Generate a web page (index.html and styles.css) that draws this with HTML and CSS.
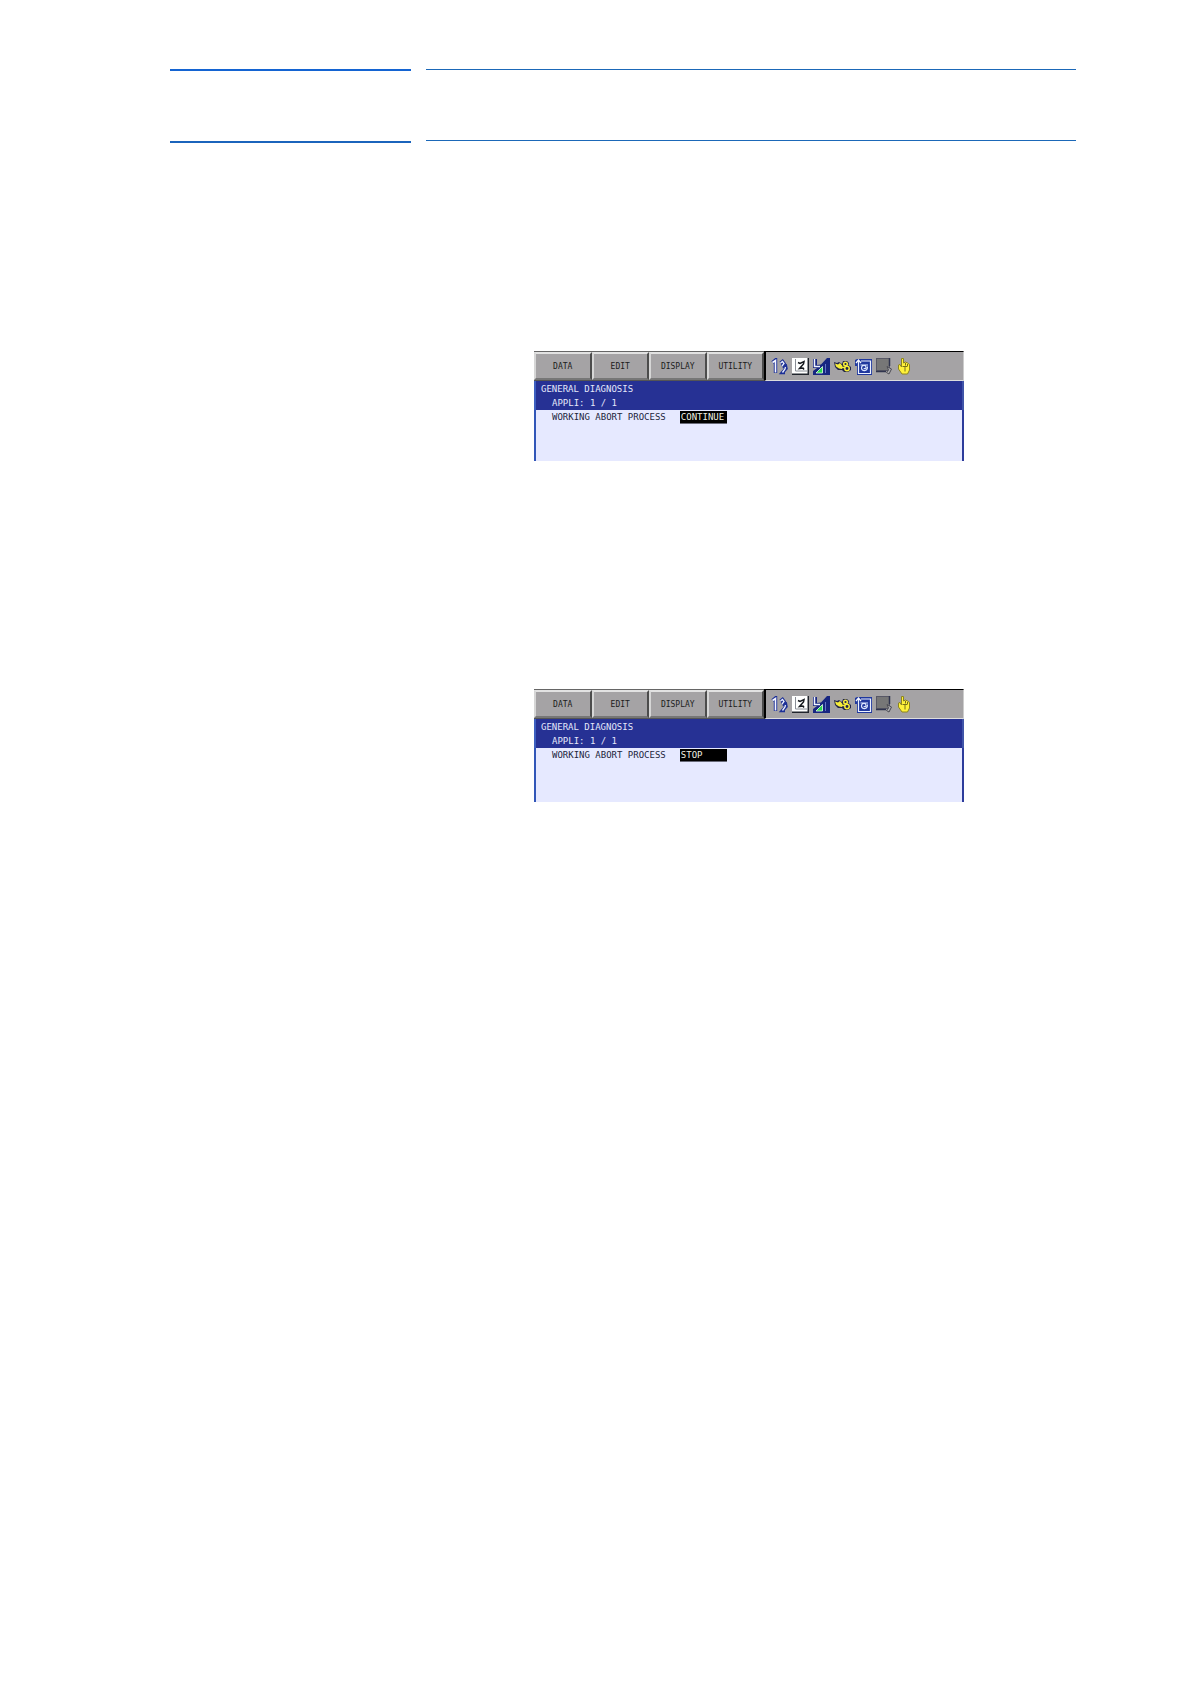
FILE: index.html
```html
<!DOCTYPE html>
<html lang="en">
<head>
    <meta charset="UTF-8">
    <meta name="viewport" content="width=device-width, initial-scale=1.0">
    <title>General Diagnosis</title>
    <link rel="stylesheet" href="styles.css">
</head>
<body>
    <!-- Status icons shared by both screens -->
    <svg class="sprite" aria-hidden="true">
        <symbol id="icon-group" viewBox="0 0 17 17">
            <path d="M1.500 4.500L4.500 2V15M9.500 5L11.500 3.500L13 5.500L11 8M11.500 8.500L14.500 8L15 10.500L11.500 14.500H14" fill="none" stroke="#1c2f96" stroke-width="3.400"/>
            <path d="M1.500 4.500L4.500 2.500V14.500" fill="none" stroke="#f4f6ff" stroke-width="1.600"/>
            <path d="M9.500 5L11.500 3.500L13 5.500L11 8M14.500 9L14 11L11.500 14.500" fill="none" stroke="#e8eeff" stroke-width="1.300"/>
        </symbol>
        <symbol id="icon-coord" viewBox="0 0 17 17">
            <rect width="17" height="17" fill="#20242c"/>
            <rect width="15.500" height="15.500" fill="#fff"/>
            <path d="M3.500 1V13H15" fill="none" stroke="#8a8e96"/>
            <path d="M6 4.500L8 5.500L12 3.500L11.500 6L7.500 10.500L11 10L12 11.500" fill="none" stroke="#16191e" stroke-width="1.500"/>
        </symbol>
        <symbol id="icon-speed" viewBox="0 0 17 17">
            <path d="M0 1H4V7L8 6.500L14 0H17V17H0V13L4 10H0Z" fill="#172681"/>
            <path d="M1.500 1V8.500H7" fill="none" stroke="#f0f4ff" stroke-width="1.500"/>
            <path d="M3 15L9.500 8.500V15Z" fill="#28d94b" stroke="#e4ffe8" stroke-width=".8"/>
            <path d="M12.500 6V15" stroke="#6676c4"/>
        </symbol>
        <symbol id="icon-cycle" viewBox="0 0 17 17">
            <path d="M0 4L3 5L5 4L8 6L9 3H13L15 5L14.500 7L17 9V12L14 14H10L8 12H4L1 9Z" fill="#222448"/>
            <path d="M1 5.500L4 6.500L6 5L8.500 8L8 11L5 10.500L2 8.500Z" fill="#f6ed39"/>
            <circle cx="11.500" cy="6" r="1.800" fill="none" stroke="#f6ed39" stroke-width="1.500"/>
            <circle cx="13" cy="10.500" r="2.200" fill="none" stroke="#f6ed39" stroke-width="1.500"/>
            <path d="M8 9.500H11" stroke="#f6ed39" stroke-width="1.500"/>
        </symbol>
        <symbol id="icon-repeat" viewBox="0 0 17 17">
            <path d="M2 1H17V17H2V8H0V2Z" fill="#20389e"/>
            <path d="M6 3H15.500V15.500H3.500V3" fill="none" stroke="#edf2ff" stroke-width="1.200"/>
            <path d="M1 5L3.500 2L6 5" fill="none" stroke="#f7faff" stroke-width="1.200"/>
            <path d="M5.500 7H13M12.500 8.500C12.500 14 6.500 13.500 6.500 10C6.500 7 11 6.500 11 9.500C11 11 9 11 9 10" fill="none" stroke="#dce7ff" stroke-width="1.200"/>
        </symbol>
        <symbol id="icon-stop" viewBox="0 0 17 17">
            <rect x=".5" y=".5" width="13" height="12" fill="#777" stroke="#585866"/>
            <path d="M0 13.500H10M13.500 0V8" stroke="#30344e" stroke-width="1.500"/>
            <path d="M11 8.500L15.500 11L13 16L10.500 14.500L12.500 12Z" fill="#a9a9ad" stroke="#4c4c54"/>
        </symbol>
        <symbol id="icon-teach" viewBox="0 0 17 17">
            <path d="M4.500 .5H6.500V5L8.500 4L10.500 5L12.500 6.500V12L10.500 16H5L1.500 11V7L3 6.500L4.500 9Z" fill="#fff23a" stroke="#8c8420"/>
            <path d="M5.500 8.500H10.500M8 8.500V13.500M8.500 5V7.500M10.500 6V8" fill="none" stroke="#77701b"/>
        </symbol>
    </svg>

    <div class="page">
        <header class="page-header">
            <div class="header-section"></div>
            <div class="header-title"></div>
        </header>

        <main class="figures">
            <section class="screen">
                <div class="toolbar">
                    <div class="menu">
                        <button type="button">DATA</button>
                        <button type="button">EDIT</button>
                        <button type="button">DISPLAY</button>
                        <button type="button">UTILITY</button>
                    </div>
                    <div class="status">
                        <svg><use href="#icon-group"/></svg>
                        <svg><use href="#icon-coord"/></svg>
                        <svg><use href="#icon-speed"/></svg>
                        <svg><use href="#icon-cycle"/></svg>
                        <svg><use href="#icon-repeat"/></svg>
                        <svg><use href="#icon-stop"/></svg>
                        <svg><use href="#icon-teach"/></svg>
                    </div>
                </div>
                <div class="screen-title">
                    <div>GENERAL DIAGNOSIS</div>
                    <div class="indent">APPLI: 1 / 1</div>
                </div>
                <div class="screen-body">
                    <div class="setting indent">
                        <label for="abort-continue">WORKING ABORT PROCESS</label>
                        <input type="text" id="abort-continue" value="CONTINUE" readonly>
                    </div>
                </div>
            </section>

            <section class="screen">
                <div class="toolbar">
                    <div class="menu">
                        <button type="button">DATA</button>
                        <button type="button">EDIT</button>
                        <button type="button">DISPLAY</button>
                        <button type="button">UTILITY</button>
                    </div>
                    <div class="status">
                        <svg><use href="#icon-group"/></svg>
                        <svg><use href="#icon-coord"/></svg>
                        <svg><use href="#icon-speed"/></svg>
                        <svg><use href="#icon-cycle"/></svg>
                        <svg><use href="#icon-repeat"/></svg>
                        <svg><use href="#icon-stop"/></svg>
                        <svg><use href="#icon-teach"/></svg>
                    </div>
                </div>
                <div class="screen-title">
                    <div>GENERAL DIAGNOSIS</div>
                    <div class="indent">APPLI: 1 / 1</div>
                </div>
                <div class="screen-body tall">
                    <div class="setting indent">
                        <label for="abort-stop">WORKING ABORT PROCESS</label>
                        <input type="text" id="abort-stop" value="STOP" readonly>
                    </div>
                </div>
            </section>
        </main>
    </div>
</body>
</html>
```

FILE: styles.css
```css
* {
    box-sizing: border-box;
}
body {
    margin: 0;
    background: #fff;
    font-family: "DejaVu Sans Mono", monospace;
    font-size: 9px;
    line-height: 14px;
}
.sprite {
    display: none;
}
.page {
    padding: 69px 114px 0 170px;
}
.page-header {
    display: grid;
    grid-template-columns: 241px 1fr;
    align-items: start;
    gap: 15px;
}
.header-section {
    height: 74px;
    border-top: 2px solid #1464d2;
    border-bottom: 2px solid #1b64bc;
}
.header-title {
    height: 72px;
    border-top: 1px solid #1b68b8;
    border-bottom: 1px solid #1b68b8;
}
.figures {
    display: flex;
    flex-direction: column;
    gap: 228px;
    margin: 208px 0 0 364px;
}
.screen {
    width: 100%;
    max-width: 430px;
}
.toolbar {
    display: flex;
    height: 30px;
    background: #a5a3a5;
}
.menu {
    display: flex;
    width: 230px;
    padding-top: 1px;
    background: #666;
    border-bottom: 1px solid #555;
}
.menu button {
    flex: 1;
    padding: 0;
    background: #a5a3a5;
    border: 2px solid;
    border-color: #e2e2e2 #4c4c4c #777 #d6d6d6;
    border-radius: 0;
    color: #1c1c1c;
    font-family: inherit;
    font-size: 8px;
}
.status {
    flex: 1;
    display: flex;
    align-items: center;
    gap: 4px;
    padding-left: 5px;
    border-style: solid;
    border-width: 1px 1px 1px 2px;
    border-color: #000 #ccc #ddd #000;
}
.status svg {
    width: 17px;
    height: 17px;
}
.screen-title {
    padding: 1px 5px 0;
    background: #263194;
    border-left: 2px solid #3d5fc0;
    border-right: 2px solid #4054a8;
    color: #e4e8fa;
}
.screen-body {
    height: 51px;
    padding: 0 5px;
    background: #e6e9ff;
    border-left: 2px solid #3156b8;
    border-right: 2px solid #2d3c9c;
    color: #23253c;
}
.screen-body.tall {
    height: 54px;
}
.indent {
    padding-left: 11px;
}
.setting {
    display: flex;
    align-items: center;
    gap: 14px;
    height: 14px;
}
.setting input {
    width: 47px;
    height: 13px;
    padding: 0 1px;
    background: #000;
    border: 0;
    border-bottom: 1px solid #686a78;
    border-radius: 0;
    outline: none;
    color: #f0f0e0;
    font-family: inherit;
    font-size: 9px;
}
```
